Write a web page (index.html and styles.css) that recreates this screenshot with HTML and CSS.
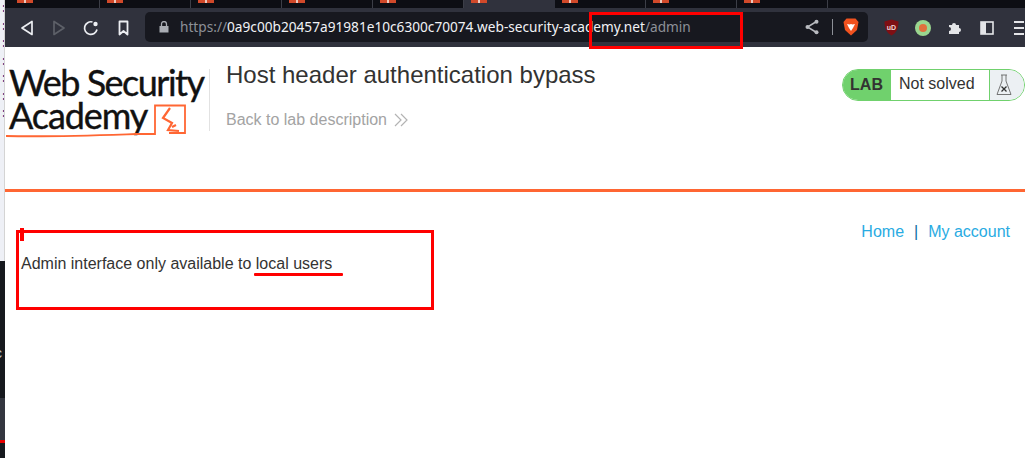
FILE: index.html
```html
<!DOCTYPE html>
<html lang="en">
<head>
<meta charset="utf-8">
<title>Host header authentication bypass</title>
<link rel="stylesheet" href="styles.css">
</head>
<body>
<div class="screen">
  <aside class="strip">
    <div class="strip-code">:<br>:<br>:<br>:<br>:<br>:<br>:</div>
    <div class="strip-dark"><span class="strip-c">c</span></div>
    <div class="strip-mid"></div>
  </aside>
  <div class="window">
    <div class="tabs">
      <div class="tab"><i class="favicon"></i></div>
      <div class="tab"><i class="favicon"></i></div>
      <div class="tab"><i class="favicon"></i></div>
      <div class="tab"><i class="favicon"></i></div>
      <div class="tab"><i class="favicon"></i></div>
      <div class="tab tab-active"><i class="favicon"></i></div>
      <div class="tab"><i class="favicon"></i></div>
      <div class="tab"><i class="favicon"></i></div>
      <div class="tab"><i class="favicon"></i></div>
    </div>
    <div class="toolbar">
      <svg class="tool tool-back" width="16" height="16" viewBox="0 0 16 16"><path d="M13 1.500v13L3 8z" fill="none" stroke="#eceef2" stroke-width="1.700" stroke-linejoin="round"/></svg>
      <svg class="tool tool-fwd" width="16" height="16" viewBox="0 0 16 16"><path d="M3 1.500v13L13 8z" fill="none" stroke="#5d6068" stroke-width="1.700" stroke-linejoin="round"/></svg>
      <svg class="tool tool-reload" width="16" height="16" viewBox="0 0 16 16"><path d="M14 9.500A6.300 6.300 0 1 1 9.500 2" fill="none" stroke="#eceef2" stroke-width="1.700"/><circle cx="12.500" cy="4" r="2.200" fill="#eceef2"/></svg>
      <svg class="tool tool-mark" width="12" height="16" viewBox="0 0 12 16"><path d="M1.500 1.500h8v13L5.500 11l-4 3.500z" fill="none" stroke="#eceef2" stroke-width="1.800" stroke-linejoin="round"/></svg>
      <div class="omnibox">
        <svg class="lock" width="10" height="12" viewBox="0 0 10 12"><path d="M0.500 5h9v6.500h-9z" fill="#a9acb3"/><path d="M2.500 5V3a2.500 2.500 0 0 1 5 0v2" fill="none" stroke="#a9acb3" stroke-width="1.300"/></svg>
        <div class="url"><span class="url-dim">https://</span>0a9c00b20457a91981e10c6300c70074.web-security-academy.net<span class="url-dim">/admin</span></div>
        <svg class="share" width="14" height="16" viewBox="0 0 14 16"><path d="M11.500 2.500L2.500 8l9 5.500" fill="none" stroke="#b9bbc0" stroke-width="1.500"/><circle cx="11.500" cy="2.800" r="2" fill="#b9bbc0"/><circle cx="2.500" cy="8" r="2" fill="#b9bbc0"/><circle cx="11.500" cy="13.200" r="2" fill="#b9bbc0"/></svg>
        <i class="omni-sep"></i>
        <svg class="brave" width="16" height="18" viewBox="0 0 16 18"><path d="M3.500 0.500h9L15.500 4l-1.500 8-6 5.500L2 12 0.500 4z" fill="#f1521f"/><path d="M4 6l2.500 0.500L8 6l1.500 0.500L12 6 10 10l-2 3-2-3z" fill="#fff"/></svg>
      </div>
      <div class="extensions">
        <svg class="ublock" width="15" height="17" viewBox="0 0 15 17"><path d="M7.500 0.500L14.500 2.500c0 6-1.500 11-7 14-5.500-3-7-8-7-14z" fill="#7e0f14"/><text x="7.500" y="10.500" class="ublock-text">uD</text></svg>
        <svg class="dot" width="16" height="16" viewBox="0 0 16 16"><circle cx="8" cy="8" r="8" fill="#9ad68f"/><circle cx="8" cy="8" r="4" fill="#e0703d"/></svg>
        <svg class="puzzle" width="15" height="15" viewBox="0 0 15 15"><path d="M1 5h3a2 2 0 1 1 4 0h3v3a2 2 0 1 1 0 4v2H1v-3a2 2 0 1 0 0-4z" fill="#e4e5e8"/></svg>
        <svg class="panel" width="14" height="14" viewBox="0 0 14 14"><rect x="1" y="1" width="12" height="12" fill="none" stroke="#e4e5e8" stroke-width="1.600"/><rect x="1" y="1" width="5" height="12" fill="#e4e5e8"/></svg>
        <div class="menu"><i></i><i></i><i></i></div>
      </div>
    </div>
    <main class="page">
      <header class="lab-header">
        <div class="logo">
          <div class="logo-line logo-one">Web Security</div>
          <div class="logo-line logo-two">Academy</div>
          <svg class="logo-mark" width="190" height="36" viewBox="0 0 190 36"><path d="M1 32c50 1 100-1 130-2h19V1.500h30V29h-16" fill="none" stroke="#ff6633" stroke-width="1.800"/><path d="M165 4l-7 10 9 5-4 7 11 1m-3-6l-4 2" fill="none" stroke="#ff6633" stroke-width="2.200"/></svg>
        </div>
        <div class="title-block">
          <h2 class="lab-title">Host header authentication bypass</h2>
          <a class="back-link">Back to lab description <span class="chevrons"><svg width="14" height="14" viewBox="0 0 14 14"><path d="M1 1l6 6-6 6M7 1l6 6-6 6" fill="none" stroke="#b3b3b3" stroke-width="1.200"/></svg></span></a>
        </div>
        <div class="status">
          <span class="status-lab">LAB</span>
          <span class="status-text">Not solved</span>
          <span class="status-icon"><svg width="16" height="22" viewBox="0 0 16 22"><path d="M5 1h6M6 1v6L1 20.500h14L10 7V1" fill="none" stroke="#666" stroke-width="0.900"/><path d="M5.500 12.500l5 5m0-5l-5 5" stroke="#333" stroke-width="1.300"/></svg></span>
        </div>
      </header>
      <hr class="rule">
      <nav class="top-links"><a>Home</a><span class="pipe">|</span><a>My account</a></nav>
      <p class="message">Admin interface only available to local users</p>
    </main>
  </div>
</div>
<div class="mark mark-url"></div>
<div class="mark mark-box"></div>
<div class="mark mark-tick"></div>
<div class="mark mark-under"></div>
</body>
</html>
```
FILE: styles.css
```css
* { box-sizing: border-box; }
html, body { margin: 0; height: 100%; overflow: hidden; background: #fff; }
body { font-family: "Liberation Sans", Arial, sans-serif; position: relative; }
.screen { display: flex; width: 1025px; height: 458px; }

.strip { width: 5px; flex: none; display: flex; flex-direction: column; background: #d4d4d4; overflow: hidden; }
.strip-code { height: 261px; width: 4px; background: #eef0f6; color: #22228a; font: 13px/17.500px "Liberation Mono", monospace; overflow: hidden; }
.strip-dark { height: 137px; width: 5px; background: #16191e; color: #c9cdd2; font-size: 14px; overflow: hidden; padding-top: 84px; }
.strip-c { margin-left: -5px; display: block; }
.strip-mid { height: 60px; background: linear-gradient(#33363f 0 42px, #e60000 42px 45px, #16191e 45px); }

.window { flex: 1; min-width: 0; display: flex; flex-direction: column; }
.tabs { height: 8px; background: #0d0e14; display: flex; flex: none; }
.tab { width: 91px; height: 8px; border-right: 1px solid #3c3e47; padding-left: 7px; }
.tab:first-child { width: 95px; padding-left: 12px; }
.tab-active { background: #30323d; border-right: 0; }
.favicon { display: block; width: 16px; height: 3px; background: #d1492a; background-image: linear-gradient(90deg, transparent 7px, #ecc9bd 7px 9px, transparent 9px); }

.toolbar { height: 39px; background: #30323d; display: flex; align-items: center; flex: none; position: relative; }
.tool { flex: none; }
.tool-back { margin-left: 14px; }
.tool-fwd { margin-left: 16px; }
.tool-reload { margin-left: 16px; }
.tool-mark { margin-left: 19px; }
.omnibox { margin-left: 15px; width: 723px; height: 30px; margin-top: -1px; background: #17181f; border-radius: 5px; display: flex; align-items: center; padding-left: 14px; flex: none; }
.lock { flex: none; }
.url { margin-left: 11px; width: 611px; font: 13.660px/20px "Noto Sans", sans-serif; color: #f1f2f5; white-space: nowrap; }
.url-dim { color: #8d9097; }
.share { margin-left: 14px; flex: none; }
.omni-sep { width: 1px; height: 16px; background: #8d9097; margin-left: 13px; flex: none; }
.brave { margin-left: 10px; flex: none; }
.extensions { display: flex; align-items: center; margin-left: 16px; }
.ublock-text { font: bold 7px "Liberation Sans", sans-serif; fill: #f0d5d5; text-anchor: middle; }
.dot { margin-left: 16px; }
.puzzle { margin-left: 17px; }
.panel { margin-left: 17px; }
.menu { margin-left: 20px; width: 10px; display: flex; flex-direction: column; gap: 4px; }
.menu i { display: block; height: 2px; background: #e4e5e8; }

.page { flex: 1; background: #fff; color: #333332; min-height: 0; }
.lab-header { height: 142px; display: flex; align-items: flex-start; position: relative; }
.logo { width: 205px; height: 62px; margin-top: 22px; padding-left: 4px; border-right: 1px solid #e2e2e2; position: relative; color: #111; flex: none; font-family: Lato, "Liberation Sans", sans-serif; }
.logo-line { font-size: 36px; line-height: 33px; letter-spacing: -1.500px; white-space: nowrap; -webkit-text-stroke: 0.400px #111; }
.logo-one { margin-top: -3px; }
.logo-two { letter-spacing: -1.100px; }
.logo-mark { position: absolute; left: 0; top: 35px; }
.title-block { margin-left: 16px; padding-top: 14px; flex: none; }
.lab-title { margin: 0; font-size: 24px; line-height: 28px; font-weight: 400; color: #333332; white-space: nowrap; }
.back-link { display: block; margin-top: 22px; font-size: 16px; line-height: 18px; color: #a3a3a3; white-space: nowrap; }
.chevrons svg { vertical-align: -2px; margin-left: 3px; }
.status { position: absolute; left: 837px; top: 22px; width: 183px; height: 32px; display: flex; border: 1px solid #70d16d; border-radius: 16px; overflow: hidden; background: #fff; }
.status-lab { width: 48px; background: #70d16d; font-weight: 700; font-size: 16px; line-height: 30px; text-align: center; color: #333332; padding-right: 1px; }
.status-text { width: 99px; padding-left: 8px; font-size: 16px; line-height: 28px; color: #333332; border-right: 1px solid #70d16d; }
.status-icon { flex: 1; background: #ecf0f3; padding-left: 6px; padding-top: 4px; }
.rule { margin: 0; height: 3px; border: 0; background: #ff6633; }
.top-links { display: flex; justify-content: flex-end; gap: 10px; padding: 31px 15px 0 0; font-size: 16px; line-height: 18px; color: #29abe2; }
.pipe { color: #0b6e9e; }
.message { margin: 14px 0 0 16px; font-size: 16px; line-height: 18px; color: #333332; }

.mark { position: absolute; }
.mark-url { left: 589px; top: 12px; width: 154px; height: 37px; border: 3px solid #f00; }
.mark-box { left: 16px; top: 230px; width: 418px; height: 80px; border: 3px solid #f00; }
.mark-tick { left: 20px; top: 228px; width: 4px; height: 13px; background: #f00; }
.mark-under { left: 254px; top: 273px; width: 89px; height: 3px; background: #f00; border-radius: 1px; }
```
